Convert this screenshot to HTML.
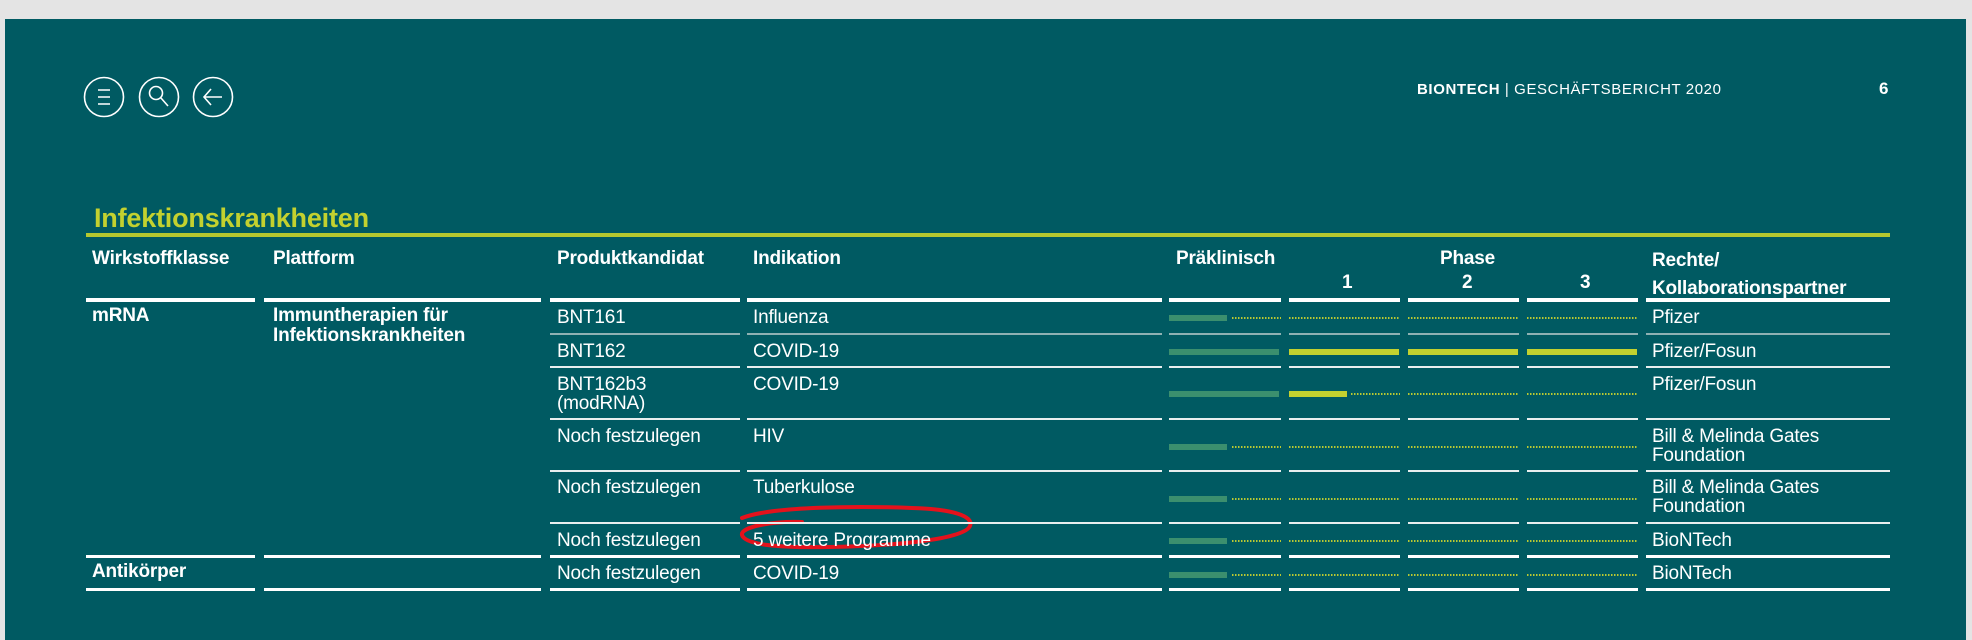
<!DOCTYPE html>
<html><head><meta charset="utf-8"><style>
*{margin:0;padding:0;box-sizing:border-box}
body{width:1972px;height:640px;background:#e4e4e4;position:relative;overflow:hidden;font-family:"Liberation Sans",sans-serif;color:#fff}
#p{position:absolute;left:5px;top:19px;width:1961px;height:621px;background:#005a62}
.a{position:absolute}
.t{position:absolute;font-size:19px;line-height:19px;white-space:nowrap;letter-spacing:-0.2px}
.b{font-weight:bold}
.w{position:absolute;background:#fff;height:4px}
.l{position:absolute;background:#e8eeee;height:2px}
.g{position:absolute;background:#8fb1b3;height:2px}
.pg{position:absolute;background:#3b8f6e;height:6px}
.py{position:absolute;background:#c3d12f;height:6px}
.d{position:absolute;height:2px;background:repeating-linear-gradient(90deg,#b9c832 0 1.5px,transparent 1.5px 3px)}
</style></head><body>
<div id="p"></div>
<svg class="a" style="left:0;top:0" width="1972" height="640">
<g fill="none" stroke="#fff" stroke-width="1.6">
<circle cx="104" cy="97" r="19.5"/><circle cx="159" cy="97" r="19.5"/><circle cx="213" cy="97" r="19.5"/>
<path d="M98 90h12M98 97h12M98 104h12"/>
<circle cx="156" cy="93" r="6.5"/><path d="M161 98l7 8"/>
<path d="M204 97h18M211 89l-7 8 7 8"/>
</g>
<path d="M742 518c30-12 120-12 170-10 40 1 62 8 58 18-6 14-80 20-140 21-50 1-85-2-88-12-2-8 30-14 60-13" fill="none" stroke="#e4121c" stroke-width="4" stroke-linecap="round"/>
</svg>
<div class="t" style="left:1417px;top:80px;font-size:15px;letter-spacing:0.6px"><b>BIONTECH</b> | GESCHÄFTSBERICHT 2020</div>
<div class="t b" style="left:1879px;top:79px;font-size:17px">6</div>
<div class="t b" style="left:94px;top:203px;font-size:27px;line-height:30px;color:#c3d12f">Infektionskrankheiten</div>
<div class="a" style="left:86px;top:233px;width:1804px;height:4px;background:#b5c82f"></div>

<div class="t b" style="left:92px;top:249px">Wirkstoffklasse</div>
<div class="t b" style="left:273px;top:249px">Plattform</div>
<div class="t b" style="left:557px;top:249px">Produktkandidat</div>
<div class="t b" style="left:753px;top:249px">Indikation</div>
<div class="t b" style="left:1176px;top:249px">Präklinisch</div>
<div class="t b" style="left:1440px;top:249px">Phase</div>
<div class="t b" style="left:1342px;top:273px">1</div>
<div class="t b" style="left:1462px;top:273px">2</div>
<div class="t b" style="left:1580px;top:273px">3</div>
<div class="t b" style="left:1652px;top:247px;line-height:28px">Rechte/<br>Kollaborationspartner</div>

<div class="w" style="left:86px;top:298px;width:169px"></div><div class="w" style="left:264px;top:298px;width:277px"></div><div class="w" style="left:550px;top:298px;width:190px"></div><div class="w" style="left:747px;top:298px;width:415px"></div><div class="w" style="left:1169px;top:298px;width:112px"></div><div class="w" style="left:1289px;top:298px;width:111px"></div><div class="w" style="left:1408px;top:298px;width:111px"></div><div class="w" style="left:1527px;top:298px;width:111px"></div><div class="w" style="left:1646px;top:298px;width:244px"></div>
<div class="w" style="left:86px;top:555px;width:169px;height:3px"></div><div class="w" style="left:264px;top:555px;width:277px;height:3px"></div><div class="w" style="left:550px;top:555px;width:190px;height:3px"></div><div class="w" style="left:747px;top:555px;width:415px;height:3px"></div><div class="w" style="left:1169px;top:555px;width:112px;height:3px"></div><div class="w" style="left:1289px;top:555px;width:111px;height:3px"></div><div class="w" style="left:1408px;top:555px;width:111px;height:3px"></div><div class="w" style="left:1527px;top:555px;width:111px;height:3px"></div><div class="w" style="left:1646px;top:555px;width:244px;height:3px"></div>
<div class="w" style="left:86px;top:588px;width:169px;height:3px"></div><div class="w" style="left:264px;top:588px;width:277px;height:3px"></div><div class="w" style="left:550px;top:588px;width:190px;height:3px"></div><div class="w" style="left:747px;top:588px;width:415px;height:3px"></div><div class="w" style="left:1169px;top:588px;width:112px;height:3px"></div><div class="w" style="left:1289px;top:588px;width:111px;height:3px"></div><div class="w" style="left:1408px;top:588px;width:111px;height:3px"></div><div class="w" style="left:1527px;top:588px;width:111px;height:3px"></div><div class="w" style="left:1646px;top:588px;width:244px;height:3px"></div>

<div class="g" style="left:550px;top:333px;width:190px"></div><div class="g" style="left:747px;top:333px;width:415px"></div><div class="g" style="left:1169px;top:333px;width:112px"></div><div class="g" style="left:1289px;top:333px;width:111px"></div><div class="g" style="left:1408px;top:333px;width:111px"></div><div class="g" style="left:1527px;top:333px;width:111px"></div><div class="g" style="left:1646px;top:333px;width:244px"></div>
<div class="l" style="left:550px;top:366px;width:190px"></div><div class="l" style="left:747px;top:366px;width:415px"></div><div class="l" style="left:1169px;top:366px;width:112px"></div><div class="l" style="left:1289px;top:366px;width:111px"></div><div class="l" style="left:1408px;top:366px;width:111px"></div><div class="l" style="left:1527px;top:366px;width:111px"></div><div class="l" style="left:1646px;top:366px;width:244px"></div>
<div class="l" style="left:550px;top:418px;width:190px"></div><div class="l" style="left:747px;top:418px;width:415px"></div><div class="l" style="left:1169px;top:418px;width:112px"></div><div class="l" style="left:1289px;top:418px;width:111px"></div><div class="l" style="left:1408px;top:418px;width:111px"></div><div class="l" style="left:1527px;top:418px;width:111px"></div><div class="l" style="left:1646px;top:418px;width:244px"></div>
<div class="l" style="left:550px;top:470px;width:190px"></div><div class="l" style="left:747px;top:470px;width:415px"></div><div class="l" style="left:1169px;top:470px;width:112px"></div><div class="l" style="left:1289px;top:470px;width:111px"></div><div class="l" style="left:1408px;top:470px;width:111px"></div><div class="l" style="left:1527px;top:470px;width:111px"></div><div class="l" style="left:1646px;top:470px;width:244px"></div>
<div class="l" style="left:550px;top:522px;width:190px"></div><div class="l" style="left:747px;top:522px;width:415px"></div><div class="l" style="left:1169px;top:522px;width:112px"></div><div class="l" style="left:1289px;top:522px;width:111px"></div><div class="l" style="left:1408px;top:522px;width:111px"></div><div class="l" style="left:1527px;top:522px;width:111px"></div><div class="l" style="left:1646px;top:522px;width:244px"></div>

<div class="t b" style="left:92px;top:306px">mRNA</div>
<div class="t b" style="left:273px;top:306px;line-height:20px">Immuntherapien für<br>Infektionskrankheiten</div>
<div class="t" style="left:557px;top:308px">BNT161</div><div class="t" style="left:753px;top:308px">Influenza</div><div class="t" style="left:1652px;top:308px">Pfizer</div>
<div class="t" style="left:557px;top:342px">BNT162</div><div class="t" style="left:753px;top:342px">COVID-19</div><div class="t" style="left:1652px;top:342px">Pfizer/Fosun</div>
<div class="t" style="left:557px;top:375px">BNT162b3<br>(modRNA)</div><div class="t" style="left:753px;top:375px">COVID-19</div><div class="t" style="left:1652px;top:375px">Pfizer/Fosun</div>
<div class="t" style="left:557px;top:427px">Noch festzulegen</div><div class="t" style="left:753px;top:427px">HIV</div><div class="t" style="left:1652px;top:427px">Bill &amp; Melinda Gates<br>Foundation</div>
<div class="t" style="left:557px;top:478px">Noch festzulegen</div><div class="t" style="left:753px;top:478px">Tuberkulose</div><div class="t" style="left:1652px;top:478px">Bill &amp; Melinda Gates<br>Foundation</div>
<div class="t" style="left:557px;top:531px">Noch festzulegen</div><div class="t" style="left:753px;top:531px">5 weitere Programme</div><div class="t" style="left:1652px;top:531px">BioNTech</div>
<div class="t b" style="left:92px;top:562px">Antikörper</div>
<div class="t" style="left:557px;top:564px">Noch festzulegen</div><div class="t" style="left:753px;top:564px">COVID-19</div><div class="t" style="left:1652px;top:564px">BioNTech</div>

<div class="pg" style="left:1169px;top:315px;width:58px"></div>
<div class="d" style="left:1232px;top:317px;width:49px"></div><div class="d" style="left:1289px;top:317px;width:111px"></div><div class="d" style="left:1408px;top:317px;width:111px"></div><div class="d" style="left:1527px;top:317px;width:111px"></div>
<div class="pg" style="left:1169px;top:349px;width:110px"></div><div class="py" style="left:1289px;top:349px;width:110px"></div><div class="py" style="left:1408px;top:349px;width:110px"></div><div class="py" style="left:1527px;top:349px;width:110px"></div>
<div class="pg" style="left:1169px;top:391px;width:110px"></div><div class="py" style="left:1289px;top:391px;width:58px"></div>
<div class="d" style="left:1351px;top:393px;width:49px"></div><div class="d" style="left:1408px;top:393px;width:111px"></div><div class="d" style="left:1527px;top:393px;width:111px"></div>
<div class="pg" style="left:1169px;top:444px;width:58px"></div>
<div class="d" style="left:1232px;top:446px;width:49px"></div><div class="d" style="left:1289px;top:446px;width:111px"></div><div class="d" style="left:1408px;top:446px;width:111px"></div><div class="d" style="left:1527px;top:446px;width:111px"></div>
<div class="pg" style="left:1169px;top:496px;width:58px"></div>
<div class="d" style="left:1232px;top:498px;width:49px"></div><div class="d" style="left:1289px;top:498px;width:111px"></div><div class="d" style="left:1408px;top:498px;width:111px"></div><div class="d" style="left:1527px;top:498px;width:111px"></div>
<div class="pg" style="left:1169px;top:538px;width:58px"></div>
<div class="d" style="left:1232px;top:540px;width:49px"></div><div class="d" style="left:1289px;top:540px;width:111px"></div><div class="d" style="left:1408px;top:540px;width:111px"></div><div class="d" style="left:1527px;top:540px;width:111px"></div>
<div class="pg" style="left:1169px;top:572px;width:58px"></div>
<div class="d" style="left:1232px;top:574px;width:49px"></div><div class="d" style="left:1289px;top:574px;width:111px"></div><div class="d" style="left:1408px;top:574px;width:111px"></div><div class="d" style="left:1527px;top:574px;width:111px"></div>
</body></html>
